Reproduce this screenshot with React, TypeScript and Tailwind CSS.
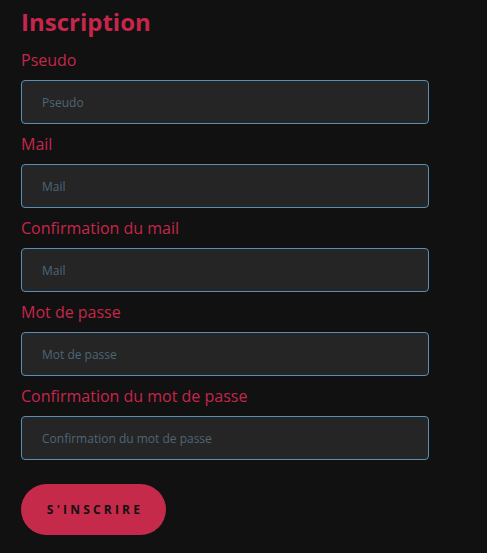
import React from "react";

const fields = [
  { label: "Pseudo", ph: "Pseudo", type: "text" },
  { label: "Mail", ph: "Mail", type: "email" },
  { label: "Confirmation du mail", ph: "Mail", type: "email" },
  { label: "Mot de passe", ph: "Mot de passe", type: "password" },
  { label: "Confirmation du mot de passe", ph: "Confirmation du mot de passe", type: "password" },
];

export default function App() {
  return (
    <div
      className="min-h-[553px] w-full bg-[#111111] px-[21px] pt-[7px]"
      style={{ fontFamily: '"Open Sans", "Noto Sans", sans-serif' }}
    >
      <h1 className="mb-[3px] text-[24px] leading-[30px] font-bold text-[#c6264b]">Inscription</h1>
      <form className="flex flex-col" onSubmit={(e) => e.preventDefault()}>
        {fields.map((f) => (
          <div key={f.label} className="flex flex-col">
            <label className="mt-[9px] mb-[9px] text-[16px] leading-[22px] text-[#c6264b]">{f.label}</label>
            <input
              type={f.type}
              placeholder={f.ph}
              className="h-[44px] w-[408px] rounded-[4px] border border-[#5a8fb3] bg-[#252525] px-[20px] text-[12px] text-[#9bb] placeholder:text-[#4d6677] outline-none"
            />
          </div>
        ))}
        <button
          type="submit"
          className="mt-[24px] h-[51px] w-[145px] rounded-full bg-[#c52a4b] pl-[3px] text-[12px] font-bold tracking-[3.2px] text-[#111]"
        >
          S'INSCRIRE
        </button>
      </form>
    </div>
  );
}
